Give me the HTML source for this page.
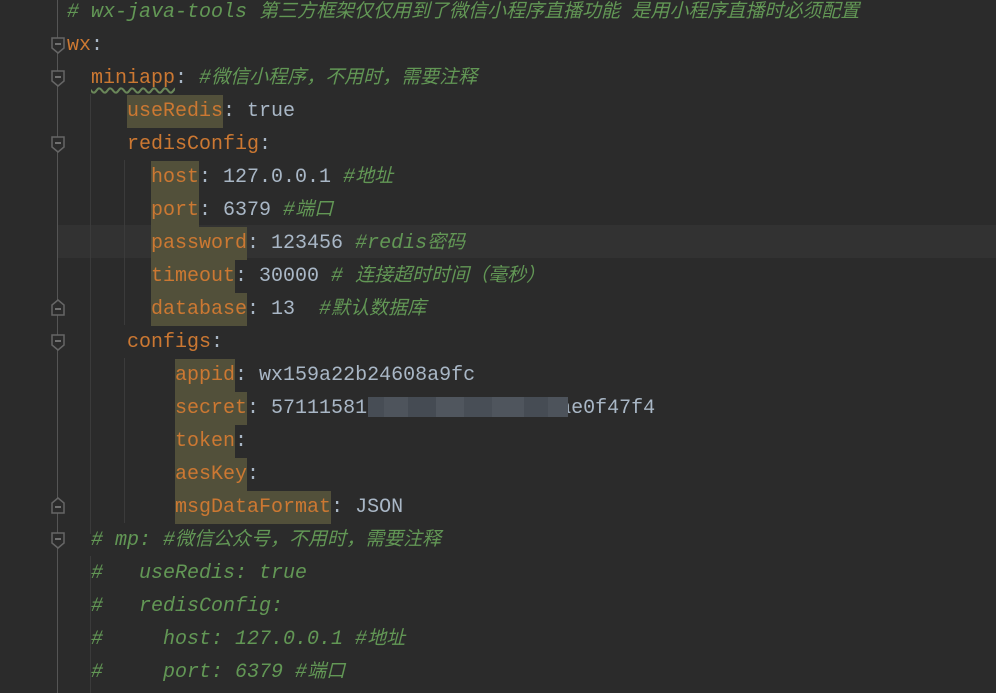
<!DOCTYPE html>
<html><head><meta charset="utf-8"><style>
body{margin:0;background:#2b2b2b;width:996px;height:693px;overflow:hidden;position:relative;font-family:"Liberation Mono","Noto Sans CJK SC",monospace;font-size:20px;color:#a9b7c6}
.gut{position:absolute;left:57px;top:0;width:1px;height:693px;background:#555}
.ig{position:absolute;width:1px;background:#3b3b3b}
.cur{position:absolute;left:58px;right:0;top:225px;height:33px;background:#323232}
.l{position:absolute;left:67px;height:33px;line-height:33px;white-space:pre}
.k{color:#cc7832}
.h{background:#52503a;display:inline-block;height:33px}
.c{color:#629755;font-style:italic}
.z{font-size:19px}
.f{position:absolute;left:51px}
.blur{position:absolute;left:368px;top:397px;width:200px;height:20px;background:linear-gradient(90deg,#474d55 0 8%,#4e545c 8% 20%,#454b53 20% 34%,#50565e 34% 48%,#484e56 48% 62%,#4f555d 62% 78%,#464c54 78% 90%,#4d535b 90%)}
</style></head><body>
<div class="cur"></div>
<div class="gut"></div>
<div class="ig" style="left:90px;top:94px;height:440px"></div>
<div class="ig" style="left:124px;top:160px;height:165px"></div>
<div class="ig" style="left:124px;top:358px;height:165px"></div>
<div class="ig" style="left:90px;top:556px;height:137px"></div>

<svg class="f" style="top:37px" width="14" height="18" viewBox="0 0 14 18"><path d="M1 1H13V11L7 16L1 11Z" fill="#2b2b2b" stroke="#666" stroke-width="1.5"/><path d="M4 7H10" stroke="#888" stroke-width="1.5"/></svg>
<svg class="f" style="top:70px" width="14" height="18" viewBox="0 0 14 18"><path d="M1 1H13V11L7 16L1 11Z" fill="#2b2b2b" stroke="#666" stroke-width="1.5"/><path d="M4 7H10" stroke="#888" stroke-width="1.5"/></svg>
<svg class="f" style="top:136px" width="14" height="18" viewBox="0 0 14 18"><path d="M1 1H13V11L7 16L1 11Z" fill="#2b2b2b" stroke="#666" stroke-width="1.5"/><path d="M4 7H10" stroke="#888" stroke-width="1.5"/></svg>
<svg class="f" style="top:298px" width="14" height="18" viewBox="0 0 14 18"><path d="M1 17H13V7L7 2L1 7Z" fill="#2b2b2b" stroke="#666" stroke-width="1.5"/><path d="M4 11H10" stroke="#888" stroke-width="1.5"/></svg>
<svg class="f" style="top:334px" width="14" height="18" viewBox="0 0 14 18"><path d="M1 1H13V11L7 16L1 11Z" fill="#2b2b2b" stroke="#666" stroke-width="1.5"/><path d="M4 7H10" stroke="#888" stroke-width="1.5"/></svg>
<svg class="f" style="top:496px" width="14" height="18" viewBox="0 0 14 18"><path d="M1 17H13V7L7 2L1 7Z" fill="#2b2b2b" stroke="#666" stroke-width="1.5"/><path d="M4 11H10" stroke="#888" stroke-width="1.5"/></svg>
<svg class="f" style="top:532px" width="14" height="18" viewBox="0 0 14 18"><path d="M1 1H13V11L7 16L1 11Z" fill="#2b2b2b" stroke="#666" stroke-width="1.5"/><path d="M4 7H10" stroke="#888" stroke-width="1.5"/></svg>

<div class="l" style="top:-4px"><span class="c"># wx-java-tools <span class="z">第三方框架仅仅用到了微信小程序直播功能 是用小程序直播时必须配置</span></span></div>
<div class="l" style="top:29px"><span class="k">wx</span>:</div>
<div class="l" style="top:62px">  <span class="k" style="text-decoration:underline wavy #6a8759;text-underline-offset:4px">miniapp</span>: <span class="c">#<span class="z">微信小程序，不用时，需要注释</span></span></div>
<div class="l" style="top:95px">     <span class="k h">useRedis</span>: true</div>
<div class="l" style="top:128px">     <span class="k">redisConfig</span>:</div>
<div class="l" style="top:161px">       <span class="k h">host</span>: 127.0.0.1 <span class="c">#<span class="z">地址</span></span></div>
<div class="l" style="top:194px">       <span class="k h">port</span>: 6379 <span class="c">#<span class="z">端口</span></span></div>
<div class="l" style="top:227px">       <span class="k h">password</span>: 123456 <span class="c">#redis<span class="z">密码</span></span></div>
<div class="l" style="top:260px">       <span class="k h">timeout</span>: 30000 <span class="c"># <span class="z">连接超时时间（毫秒）</span></span></div>
<div class="l" style="top:293px">       <span class="k h">database</span>: 13  <span class="c">#<span class="z">默认数据库</span></span></div>
<div class="l" style="top:326px">     <span class="k">configs</span>:</div>
<div class="l" style="top:359px">         <span class="k h">appid</span>: wx159a22b24608a9fc</div>
<div class="l" style="top:392px">         <span class="k h">secret</span>: 57111581xxxxxxxxxxxxxxxxae0f47f4</div>
<div class="l" style="top:425px">         <span class="k h">token</span>:</div>
<div class="l" style="top:458px">         <span class="k h">aesKey</span>:</div>
<div class="l" style="top:491px">         <span class="k h">msgDataFormat</span>: JSON</div>
<div class="l" style="top:524px">  <span class="c"># mp: #<span class="z">微信公众号，不用时，需要注释</span></span></div>
<div class="l" style="top:557px">  <span class="c">#   useRedis: true</span></div>
<div class="l" style="top:590px">  <span class="c">#   redisConfig:</span></div>
<div class="l" style="top:623px">  <span class="c">#     host: 127.0.0.1 #<span class="z">地址</span></span></div>
<div class="l" style="top:656px">  <span class="c">#     port: 6379 #<span class="z">端口</span></span></div>
<div class="blur"></div>
</body></html>
